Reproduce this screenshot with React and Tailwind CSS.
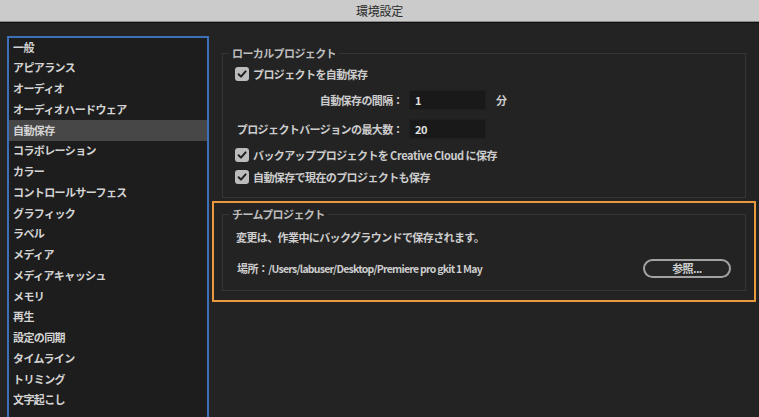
import React from "react";

const items = [
  "一般",
  "アピアランス",
  "オーディオ",
  "オーディオハードウェア",
  "自動保存",
  "コラボレーション",
  "カラー",
  "コントロールサーフェス",
  "グラフィック",
  "ラベル",
  "メディア",
  "メディアキャッシュ",
  "メモリ",
  "再生",
  "設定の同期",
  "タイムライン",
  "トリミング",
  "文字起こし",
];

function Check() {
  return (
    <span className="flex h-[14px] w-[14px] shrink-0 items-center justify-center rounded-[3px] bg-[#bcbcbc]">
      <svg width="12" height="12" viewBox="0 0 12 12">
        <path d="M2.6 6.2 L5 8.6 L9.6 3.4" fill="none" stroke="#1f1f1f" strokeWidth="2" strokeLinecap="round" strokeLinejoin="round" />
      </svg>
    </span>
  );
}

export default function App() {
  return (
    <div className="flex h-[417px] w-[759px] flex-col overflow-hidden bg-[#232323] font-['Noto_Sans_CJK_JP',sans-serif] text-[11px] tracking-[-0.6px]">
      <div className="flex h-[22px] shrink-0 items-center justify-center border-b border-[#8a8a8a] bg-[#cbcbcb] text-[12px] tracking-[-0.2px] text-[#2b2b2b]">
        環境設定
      </div>
      <div className="h-px shrink-0 bg-[#0f0f0f]" />
      <div className="flex min-h-0 flex-1">
        <div className="ml-[7px] mt-[13px] h-[420px] w-[202px] shrink-0 border-2 border-[#3e70b8] bg-[#1d1d1d]">
          <div className="-mt-px flex flex-col">
            {items.map((it) => (
              <div
                key={it}
                className={
                  "flex h-[20.75px] items-center pb-[1px] pl-[4px] font-semibold text-[#d4d4d4] " +
                  (it === "自動保存" ? "bg-[#474747]" : "")
                }
              >
                {it}
              </div>
            ))}
          </div>
        </div>
        <div className="flex min-w-0 flex-1 flex-col px-[3px]">
          <fieldset className="mx-[10px] mt-[23px] border border-[#363636] pb-[11px]">
            <legend className="ml-[6px] px-[3px] leading-[15px] font-semibold text-[#bdbdbd]">ローカルプロジェクト</legend>
            <div className="mt-[4px] flex h-[18px] items-center gap-[4px] pl-[12px] font-semibold text-[#cdcdcd]">
              <Check />
              <span>プロジェクトを自動保存</span>
            </div>
            <div className="mt-[7px] flex h-[20px] items-center pl-[10px] font-semibold text-[#cdcdcd]">
              <span className="w-[170px] whitespace-nowrap text-right">自動保存の間隔：</span>
              <div className="ml-[6px] flex h-[20px] w-[77px] items-center border border-[#1f1f1f] bg-[#191919] pl-[5px] text-[#e0e0e0]">1</div>
              <span className="ml-[10px]">分</span>
            </div>
            <div className="mt-[9px] flex h-[20px] items-center pl-[10px] font-semibold text-[#cdcdcd]">
              <span className="w-[170px] whitespace-nowrap text-right">プロジェクトバージョンの最大数：</span>
              <div className="ml-[6px] flex h-[20px] w-[77px] items-center border border-[#1f1f1f] bg-[#191919] pl-[5px] text-[#e0e0e0]">20</div>
            </div>
            <div className="mt-[7px] flex h-[18px] items-center gap-[4px] pl-[12px] font-semibold text-[#cdcdcd]">
              <Check />
              <span>バックアッププロジェクトを <span className="tracking-[-0.4px]">Creative Cloud</span> に保存</span>
            </div>
            <div className="mt-[4px] flex h-[18px] items-center gap-[4px] pl-[12px] font-semibold text-[#cdcdcd]">
              <Check />
              <span>自動保存で現在のプロジェクトも保存</span>
            </div>
          </fieldset>
          <div className="mt-[3px] border-2 border-[#ea993e]">
            <fieldset className="mx-[8px] mb-[9px] mt-[4px] border border-[#363636] pb-[12px]">
              <legend className="ml-[6px] px-[3px] leading-[15px] font-semibold text-[#bdbdbd]">チームプロジェクト</legend>
              <div className="mt-[7px] flex h-[16px] items-center pl-[13px] font-semibold text-[#cdcdcd]">
                変更は、作業中にバックグラウンドで保存されます。
              </div>
              <div className="mt-[14px] flex h-[19px] items-center justify-between pl-[14px] pr-[14px] font-semibold text-[#cdcdcd]">
                <span>
                  場所：<span className="text-[10.5px] tracking-[-0.75px]">/Users/labuser/Desktop/Premiere pro gkit 1 May</span>
                </span>
                <button className="flex h-[19px] w-[88px] items-center justify-center rounded-full border-2 border-[#a3a3a3] bg-[#262626] text-[11px] font-semibold text-[#d0d0d0]">
                  参照...
                </button>
              </div>
            </fieldset>
          </div>
        </div>
      </div>
    </div>
  );
}
